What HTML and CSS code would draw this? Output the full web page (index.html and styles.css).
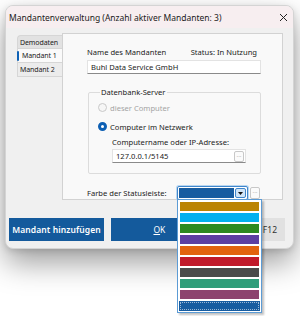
FILE: index.html
```html
<!DOCTYPE html>
<html lang="de">

<head>
  <meta charset="UTF-8">
  <title>Mandantenverwaltung</title>
  <link rel="stylesheet" href="styles.css">
</head>

<body>
  <div class="dialog">
    <div class="titlebar">
      <span>Mandantenverwaltung (Anzahl aktiver Mandanten: 3)</span>
      <svg class="close" width="9" height="9" viewBox="0 0 9 9">
        <path d="M1 1 L8 8 M8 1 L1 8" stroke="#222" stroke-width="1" fill="none" />
      </svg>
    </div>

    <div class="main">
      <ul class="tabs">
        <li class="tab tab-first">Demodaten</li>
        <li class="tab active">Mandant 1</li>
        <li class="tab">Mandant 2</li>
      </ul>

      <section class="panel">
        <div class="field-head">
          <span>Name des Mandanten</span>
          <span>Status: In Nutzung</span>
        </div>
        <div class="textbox name-box">Buhl Data Service GmbH</div>

        <fieldset class="group">
          <legend>Datenbank-Server</legend>
          <div class="radio-row disabled">
            <span class="radio"></span>
            <span>dieser Computer</span>
          </div>
          <div class="radio-row">
            <span class="radio checked"></span>
            <span>Computer im Netzwerk</span>
          </div>
          <div class="sub-label">Computername oder IP-Adresse:</div>
          <div class="textbox ip-box">
            <span>127.0.0.1/5145</span>
            <span class="dots-btn">&middot;&middot;&middot;</span>
          </div>
        </fieldset>

        <div class="color-row">
          <span class="color-label">Farbe der Statusleiste:</span>
          <div class="combo">
            <span class="combo-value"></span>
            <span class="combo-arrow">
              <svg width="5" height="3" viewBox="0 0 5 3">
                <path d="M0 0 H5 L2.5 3 Z" fill="#111" />
              </svg>
            </span>
          </div>
          <span class="dots-btn combo-dots">&middot;&middot;&middot;</span>
        </div>
      </section>
    </div>

    <div class="footer">
      <button class="btn btn-blue btn-add">Mandant hinzufügen</button>
      <button class="btn btn-blue btn-ok"><span><u>O</u>K</span><span>F11</span></button>
      <button class="btn btn-gray btn-cancel"><span>Abbrechen</span><span>F12</span></button>
    </div>

    <ul class="color-list">
      <li class="swatch" style="background:#bb8404"></li>
      <li class="swatch" style="background:#02b0ef"></li>
      <li class="swatch" style="background:#2c8a21"></li>
      <li class="swatch" style="background:#5d3fa2"></li>
      <li class="swatch" style="background:#e2630f"></li>
      <li class="swatch" style="background:#c11a2b"></li>
      <li class="swatch" style="background:#4b4b4b"></li>
      <li class="swatch" style="background:#2f9e7a"></li>
      <li class="swatch" style="background:#8d446e"></li>
      <li class="swatch selected" style="background:#175ca0"></li>
    </ul>
  </div>
</body>

</html>
```

FILE: styles.css
```css
* {
  box-sizing: border-box;
}

html,
body {
  height: 316px;
}

body {
  margin: 0;
  padding-top: 5px;
  background-color: #ffffff;
  font-family: "Noto Sans", "Open Sans", sans-serif;
  font-size: 7.6px;
  color: #1b1b1b;
  white-space: nowrap;
}

ul {
  list-style: none;
  margin: 0;
  padding: 0;
}

.dialog {
  position: relative;
  margin-left: 5px;
  width: 289px;
  height: 244px;
  border: 1px solid #d4d4d4;
  border-radius: 8px;
  background-color: #f0f0f0;
  box-shadow: 0 14px 30px rgba(0, 0, 0, 0.38), 0 2px 6px rgba(0, 0, 0, 0.12);
}

.titlebar {
  height: 22px;
  display: flex;
  align-items: center;
  justify-content: space-between;
  padding: 0 5px 0 3px;
  background-color: #f7eef0;
  border-radius: 7px 7px 0 0;
  font-size: 8.5px;
}

.main {
  display: flex;
  padding: 5px 9px 0 11px;
}

.tabs {
  width: 45px;
  padding-top: 2px;
}

.tab {
  position: relative;
  height: 14px;
  display: flex;
  align-items: center;
  padding-left: 2px;
  background-color: #ececec;
  border: 1px solid #d6d6d6;
  border-right: none;
  border-top: none;
  font-size: 7px;
  letter-spacing: -0.1px;
}

.tab-first {
  background-color: #e2e2e2;
  border-top: 1px solid #d6d6d6;
  border-radius: 4px 0 0 0;
}

.tab.active {
  background-color: #fafafa;
  padding-left: 4px;
}

.tab.active::before {
  content: "";
  position: absolute;
  left: -1px;
  top: 2px;
  width: 2px;
  height: 10px;
  border-radius: 1px;
  background-color: #0f62b6;
}

.panel {
  width: 221px;
  height: 167px;
  border: 1px solid #d2d2d2;
  background-color: #f9f9f9;
  padding: 13px 21px 0 24px;
}

.field-head {
  display: flex;
  justify-content: space-between;
  height: 11px;
  line-height: 11px;
  padding-right: 4px;
}

.textbox {
  margin-top: 2px;
  height: 14px;
  background-color: #ffffff;
  border: 1px solid #e3e3e3;
  border-bottom-color: #8a8a8a;
  display: flex;
  align-items: center;
  justify-content: space-between;
  padding: 0 1px 0 3px;
}

.group {
  margin: 14px 0 0 1px;
  padding: 5px 0 10px 9px;
  border: 1px solid #dcdcdc;
  border-radius: 2px;
}

.group legend {
  padding: 0 1px;
  margin-left: 2px;
  line-height: 9px;
}

.radio-row {
  display: flex;
  align-items: center;
  height: 11px;
  gap: 3px;
  margin-bottom: 8px;
}

.radio-row.disabled {
  color: #a4a4a4;
}

.radio {
  width: 9px;
  height: 9px;
  border-radius: 50%;
  border: 1px solid #c9c9c9;
  background-color: #f6f6f6;
}

.radio.checked {
  border: 3px solid #0d5fb3;
  background-color: #ffffff;
}

.sub-label {
  margin: -3px 0 0 14px;
  height: 11px;
  line-height: 11px;
}

.ip-box {
  margin: 1px 0 0 14px;
  width: 134px;
}

.dots-btn {
  width: 10px;
  height: 11px;
  border: 1px solid #c8c8c8;
  border-radius: 2px;
  background-color: #fbfbfb;
  color: #7a7a7a;
  font-size: 6px;
  line-height: 9px;
  text-align: center;
}

.color-row {
  display: flex;
  align-items: center;
  margin-top: 12px;
  height: 14px;
}

.color-label {
  width: 90px;
}

.combo {
  display: flex;
  align-items: center;
  gap: 1px;
  width: 71px;
  height: 14px;
  padding: 1px;
  border: 1px solid #3f86cc;
  border-radius: 2px;
  background-color: #ffffff;
  box-shadow: 0 0 0 1px #b9d6f0;
}

.combo-value {
  flex: 1;
  height: 10px;
  background-color: #175ca0;
}

.combo-arrow {
  width: 11px;
  height: 10px;
  display: flex;
  align-items: center;
  justify-content: center;
  border: 1px solid #3f86cc;
  border-radius: 2px;
  background-color: #cfe4f7;
}

.combo-dots {
  margin-left: 2px;
  height: 12px;
}

.footer {
  display: flex;
  padding: 18px 0 0 3px;
}

.btn {
  height: 23px;
  border: none;
  font-family: inherit;
  font-size: 8.5px;
  padding: 0;
}

.btn-blue {
  background-color: #145a9c;
  color: #ffffff;
}

.btn-add {
  width: 95px;
  font-weight: 600;
  letter-spacing: 0.1px;
}

.btn-ok {
  width: 104px;
  margin-left: 7px;
  display: flex;
  align-items: center;
  justify-content: center;
  gap: 13px;
  padding-left: 20px;
}

.btn-gray {
  width: 68px;
  margin-left: 2px;
  background-color: #e1e1e1;
  color: #333333;
  display: flex;
  align-items: center;
  justify-content: flex-end;
  gap: 8px;
  padding-right: 8px;
}

.color-list {
  position: absolute;
  left: 171px;
  top: 193px;
  width: 85px;
  padding: 2px 1px 1px 1px;
  background-color: #ffffff;
  border: 1px solid #5b9bd5;
  box-shadow: 2px 2px 2px rgba(0, 0, 0, 0.25);
  display: flex;
  flex-direction: column;
  gap: 2px;
}

.swatch {
  height: 9px;
  margin: 0 1px;
}

.swatch.selected {
  height: 10px;
  margin: 0;
  outline: 1px dotted #9bb9d8;
  outline-offset: -2px;
}
```
